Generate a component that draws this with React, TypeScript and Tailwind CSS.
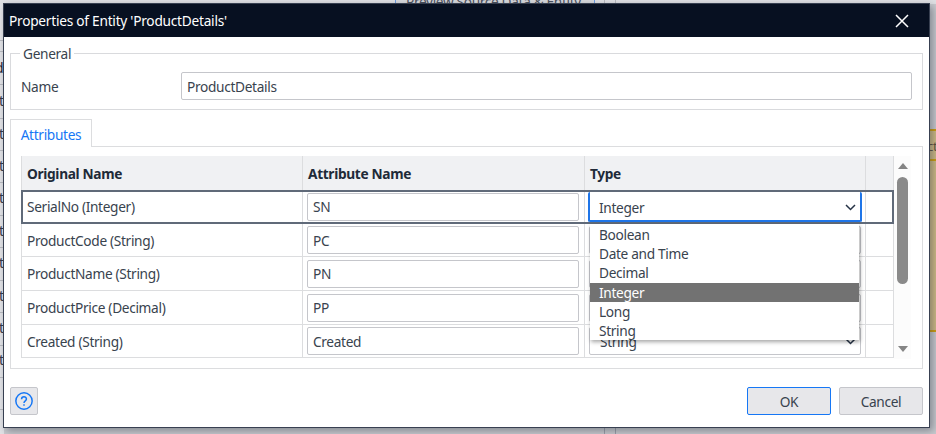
import React from 'react';

const rows = [
  { name: 'SerialNo (Integer)', attr: 'SN', h: 'h-[34px]' },
  { name: 'ProductCode (String)', attr: 'PC', h: 'h-[33px]' },
  { name: 'ProductName (String)', attr: 'PN', h: 'h-[34px]' },
  { name: 'ProductPrice (Decimal)', attr: 'PP', h: 'h-[34px]' },
  { name: 'Created (String)', attr: 'Created', h: 'h-[33px]' },
];

const options = ['Boolean', 'Date and Time', 'Decimal', 'Integer', 'Long', 'String'];

function Chevron() {
  return (
    <svg className="h-[7px] w-[11px] shrink-0" viewBox="0 0 11 7" fill="none" stroke="#263346" strokeWidth="1.5">
      <path d="M1 1l4.5 4.5L10 1" />
    </svg>
  );
}

function Backdrop() {
  return (
    <div className="absolute inset-0 bg-[#c9cbcf]">
      <div className="absolute left-0 top-0 h-full w-[4px] overflow-hidden bg-[#e2e3e6]">
        {[40, 51, 84, 118, 150, 182, 215, 247, 280, 312, 345, 377, 409].map((y) => (
          <div key={y} className="absolute left-0 h-px w-full bg-[#b9bbc0]" style={{ top: y }} />
        ))}
        {[93, 126, 158, 190, 223, 255, 288, 320, 352].map((y) => (
          <span key={y} className="absolute left-[-1px] text-[14px] leading-[16px] text-[#35394a]" style={{ top: y }}>
            t
          </span>
        ))}
        <span className="absolute left-[-5px] top-[60px] text-[14px] leading-[16px] text-[#1d2433]">d</span>
      </div>
      <div className="absolute left-0 top-0 h-[4px] w-full overflow-hidden bg-[#e0e1e4]">
        <div className="absolute left-[395px] top-0 h-[4px] w-[200px] overflow-hidden border-x border-[#6b9be0] bg-[#d8d9dc]">
          <span className="absolute left-[10px] top-[-6px] whitespace-nowrap text-[13.7px] leading-[16px] tracking-[-0.35px] text-[#4a505c]">
            Preview Source Data &amp; Entity
          </span>
        </div>
        <div className="absolute left-[604px] top-0 h-full w-[12px] border-x border-[#b7b9be]" />
      </div>
      <div className="absolute bottom-0 left-[604px] h-[6px] w-[12px] border-x border-[#999da8]" />
      <div className="absolute right-0 top-[129px] h-[203px] w-[7px] overflow-hidden border-y-2 border-[#d09e0c] bg-[#cfbb84]">
        <span className="absolute left-[-2px] top-[7px] text-[13px] leading-[16px] text-[#5d4f3d]">ct</span>
        <div className="absolute left-0 top-[28px] h-[2px] w-full bg-[#d09e0c]" />
      </div>
    </div>
  );
}

export default function App() {
  return (
    <div className="relative h-[434px] w-[936px] overflow-hidden p-[3px] font-['Noto_Sans','Open_Sans',sans-serif] text-[13.7px] leading-[19px] tracking-[-0.33px] text-[#39434e]">
      <Backdrop />
      <div className="relative flex h-[425px] w-[927px] flex-col border border-[#384051] bg-white shadow-[3px_3px_8px_0px_rgba(50,55,70,0.45)]">
        <header className="flex h-[33px] shrink-0 items-center justify-between bg-[#071021] pl-[5px] pr-[20px] text-white">
          <h1 className="tracking-[-0.25px]">Properties of Entity 'ProductDetails'</h1>
          <svg className="h-[14px] w-[14px]" viewBox="0 0 14 14" stroke="white" strokeWidth="1.5">
            <path d="M1 1l12 12M13 1L1 13" />
          </svg>
        </header>

        <main className="flex flex-col px-[6px] pt-[7px]">
          <fieldset className="flex h-[66px] flex-col border border-[#d9dadd] px-[10px]">
            <legend className="ml-[-1px] px-[3px]">General</legend>
            <div className="mt-[9px] flex items-center">
              <label className="w-[160px]">Name</label>
              <div className="flex h-[28px] w-[731px] items-center rounded-[2px] border border-[#c5c6cb] px-[5px]">ProductDetails</div>
            </div>
          </fieldset>

          <div className="mt-[9px] flex">
            <div className="z-10 mb-[-1px] flex h-[28px] w-[82px] items-center justify-center border border-b-0 border-[#dcdddf] bg-white pt-[2px] text-[#1677f5]">
              Attributes
            </div>
          </div>
          <section className="flex h-[223px] border border-[#dcdddf] px-[10px] pt-[9px]">
            <div className="flex w-[873px] flex-col">
              <div className="flex h-[34px] shrink-0 border-x border-[#dcdddf] bg-[#f0f1f3] font-bold text-[#202a38]">
                <div className="flex w-[281px] items-center border-r border-[#dcdddf] pl-[5px]">Original Name</div>
                <div className="flex w-[282px] items-center border-r border-[#dcdddf] pl-[5px]">Attribute Name</div>
                <div className="flex w-[281px] items-center border-r border-[#dcdddf] pl-[5px]">Type</div>
              </div>
              <div className="relative">
                {rows.map((row) => (
                  <div key={row.name} className={`flex ${row.h} border-x border-b border-[#dcdddf]`}>
                    <div className="flex w-[281px] items-center border-r border-[#dcdddf] pl-[5px]">{row.name}</div>
                    <div className="flex w-[282px] items-center border-r border-[#dcdddf] pl-[4px]">
                      <div className="flex h-[28px] w-[272px] items-center rounded-[2px] border border-[#c5c6cb] pl-[5px]">{row.attr}</div>
                    </div>
                    <div className="flex w-[281px] items-center border-r border-[#dcdddf] pl-[4px]">
                      <div className="flex h-[28px] w-[272px] items-center justify-between rounded-[2px] border border-[#c5c6cb] pl-[10px] pr-[4px]">
                        {row.attr === 'SN' ? 'Integer' : 'String'}
                        <Chevron />
                      </div>
                    </div>
                  </div>
                ))}
                <div className="absolute left-0 top-0 h-[34px] w-[873px] border-2 border-[#606a79]" />
                <div className="absolute left-[567px] top-[2px] flex h-[30px] w-[274px] items-center justify-between rounded-[2px] border-2 border-t-0 border-[#1f75e8] bg-white pl-[9px] pr-[4px] pt-[2px]">
                  Integer
                  <Chevron />
                </div>
                <div className="absolute left-[569px] top-[34px] flex h-[116px] w-[269px] flex-col bg-white pt-px shadow-[1px_2px_4px_rgba(0,0,0,0.35)]">
                  {options.map((option) => (
                    <div
                      key={option}
                      className={
                        option === 'Integer'
                          ? 'flex h-[19px] items-center bg-[#727272] pl-[9px] text-white'
                          : 'flex h-[19.2px] items-center pl-[9px]'
                      }
                    >
                      {option}
                    </div>
                  ))}
                </div>
              </div>
            </div>
            <div className="flex h-[203px] w-[17px] flex-col items-center bg-[#fcfcfc] pt-[7px]">
              <div className="h-0 w-0 border-x-[5px] border-b-[6px] border-x-transparent border-b-[#858585]" />
              <div className="mt-[8px] h-[107px] w-[11px] shrink-0 rounded-full bg-[#8a8a8a]" />
              <div className="mt-[62px] h-0 w-0 border-x-[5px] border-t-[6px] border-x-transparent border-t-[#858585]" />
            </div>
          </section>
        </main>

        <footer className="mt-[18px] flex items-center px-[6px]">
          <button className="flex h-[28px] w-[28px] items-center justify-center rounded-[2px] border border-[#c5c6cb] bg-[#e7e7ea]">
            <svg className="h-[18px] w-[18px]" viewBox="0 0 17 17" fill="none" stroke="#1677f5" strokeWidth="1.4">
              <circle cx="8.5" cy="8.5" r="7.7" />
              <path d="M6.2 6.8C6.2 3.7 10.8 3.8 10.8 6.6C10.8 8.4 8.5 8.3 8.5 10.4M8.5 11.6v1.5" />
            </svg>
          </button>
          <div className="ml-auto flex gap-[8px]">
            <button className="h-[28px] w-[84px] rounded-[2px] border border-[#1677f5] bg-[#e7e7ea]">OK</button>
            <button className="h-[28px] w-[84px] rounded-[2px] border border-[#c5c6cb] bg-[#e7e7ea]">Cancel</button>
          </div>
        </footer>
      </div>
    </div>
  );
}
